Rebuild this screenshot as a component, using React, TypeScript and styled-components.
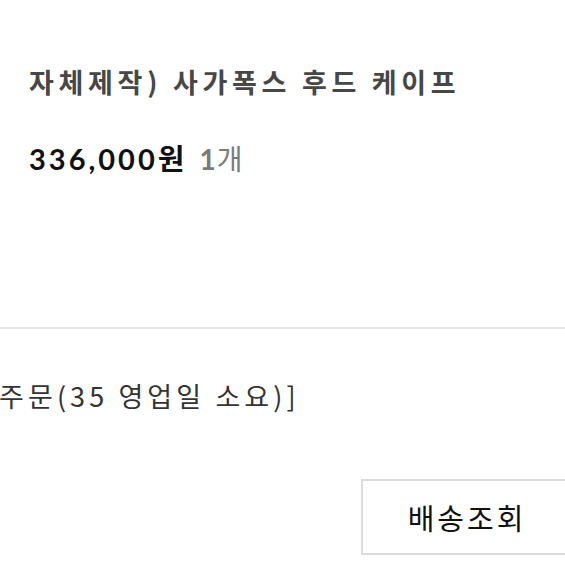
import React from "react";
import styled, { createGlobalStyle } from "styled-components";

const GlobalStyle = createGlobalStyle`
  html, body {
    margin: 0;
    padding: 0;
    background: #ffffff;
    overflow: hidden;
  }
  body {
    font-family: "Noto Sans CJK KR", "Noto Sans", sans-serif;
  }
`;

const Page = styled.div`
  width: 565px;
  height: 565px;
  overflow: hidden;
  display: flex;
  flex-direction: column;
`;

const ItemBox = styled.div`
  padding: 62px 0 0 29px;
  height: 266px;
  box-sizing: border-box;
`;

const Title = styled.div`
  font-size: 27px;
  font-weight: 700;
  color: #474747;
  letter-spacing: 4.7px;
  line-height: 40px;
  white-space: nowrap;
`;

const PriceRow = styled.div`
  margin-top: 37px;
  display: flex;
  align-items: baseline;
  gap: 12px;
  line-height: 40px;
`;

const Price = styled.span`
  font-family: Lato, "Noto Sans CJK KR", sans-serif;
  font-size: 29px;
  font-weight: 700;
  color: #111;
  letter-spacing: 3px;
`;

const Qty = styled.span`
  font-family: Lato, "Noto Sans CJK KR", sans-serif;
  font-size: 28px;
  color: #7a7a7a;
  letter-spacing: 1px;
`;

const QtyNum = styled.span`
  font-weight: 700;
`;

const Divider = styled.hr`
  margin: 61px 0 0;
  border: none;
  height: 2px;
  background: #e8e8e8;
`;

const Note = styled.div`
  margin: 49px 0 0 -1px;
  font-size: 27px;
  color: #333;
  line-height: 36px;
  white-space: nowrap;
  letter-spacing: 4.1px;
`;

const Actions = styled.div`
  margin-top: 65px;
  display: flex;
  justify-content: flex-end;
  margin-right: -40px;
`;

const TrackButton = styled.button`
  width: 244px;
  height: 76px;
  background: #fff;
  border: 2px solid #dcdcdc;
  font-family: "Noto Sans CJK KR", sans-serif;
  font-size: 29px;
  color: #111;
  letter-spacing: 3px;
  padding: 0 32px 0 0;
`;

export default function App() {
  return (
    <Page>
      <GlobalStyle />
      <ItemBox>
        <Title>자체제작) 사가폭스 후드 케이프</Title>
        <PriceRow>
          <Price>336,000원</Price>
          <Qty>
            <QtyNum>1</QtyNum>개
          </Qty>
        </PriceRow>
      </ItemBox>
      <Divider />
      <Note>주문(35 영업일 소요)]</Note>
      <Actions>
        <TrackButton>배송조회</TrackButton>
      </Actions>
    </Page>
  );
}
